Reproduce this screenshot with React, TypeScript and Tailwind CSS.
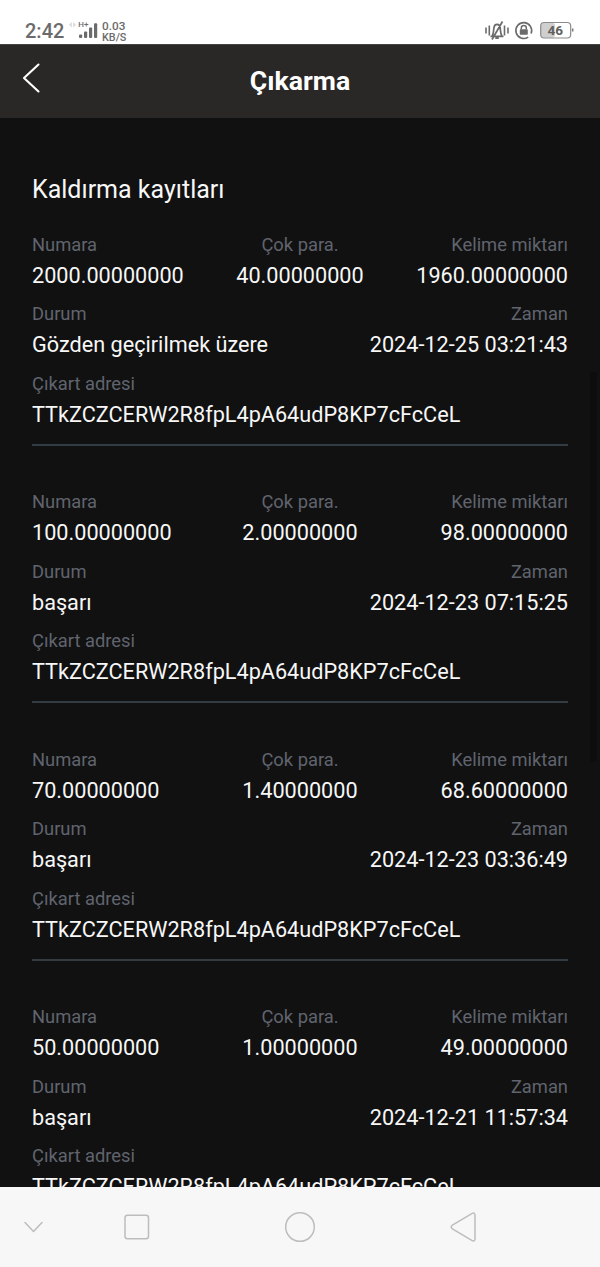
type Entry = {
  amount: string;
  fee: string;
  net: string;
  status: string;
  time: string;
};

const ADDRESS = "TTkZCZCERW2R8fpL4pA64udP8KP7cFcCeL";

const entries: Entry[] = [
  { amount: "2000.00000000", fee: "40.00000000", net: "1960.00000000", status: "Gözden geçirilmek üzere", time: "2024-12-25 03:21:43" },
  { amount: "100.00000000", fee: "2.00000000", net: "98.00000000", status: "başarı", time: "2024-12-23 07:15:25" },
  { amount: "70.00000000", fee: "1.40000000", net: "68.60000000", status: "başarı", time: "2024-12-23 03:36:49" },
  { amount: "50.00000000", fee: "1.00000000", net: "49.00000000", status: "başarı", time: "2024-12-21 11:57:34" },
];

function Field({ label, value, align = "text-left" }: { label: string; value: string; align?: string }) {
  return (
    <div className={`min-w-0 whitespace-nowrap ${align}`}>
      <div className="h-7 text-[18.33px] leading-7 text-[#60646e]">{label}</div>
      <div className="h-[34px] text-[21.67px] leading-[34px] text-[#f7f7f7]">{value}</div>
    </div>
  );
}

function Record({ entry }: { entry: Entry }) {
  return (
    <section className="h-[257.4px] shrink-0">
      <div className="flex h-[215.2px] flex-col gap-[7.5px] border-b-2 border-[#333b43]">
        <div className="grid grid-cols-3">
          <Field label="Numara" value={entry.amount} />
          <Field label="Çok para." value={entry.fee} align="text-center" />
          <Field label="Kelime miktarı" value={entry.net} align="text-right" />
        </div>
        <div className="flex justify-between">
          <Field label="Durum" value={entry.status} />
          <Field label="Zaman" value={entry.time} align="text-right" />
        </div>
        <Field label="Çıkart adresi" value={ADDRESS} />
      </div>
    </section>
  );
}

function StatusBar() {
  return (
    <div className="flex h-11 shrink-0 items-start justify-between bg-white pl-[25px] pr-[26px] text-[#6b6b6b]">
      <div className="flex pt-[19px]">
        <span className="w-[43px] whitespace-nowrap text-[20px] leading-6 font-medium">2:42</span>
        <svg className="h-6 w-[34px]" viewBox="68 19 34 24" fill="currentColor">
          <path d="M71.8 22 69 24.800l2.800 2.800zM73.200 22l2.800 2.800-2.800 2.800z" opacity=".25" />
          <text x="78.300" y="27" fontSize="8" fontWeight="500">H+</text>
          <rect x="79" y="34.500" width="3.200" height="3.500" rx="1" />
          <rect x="84" y="31.500" width="3.200" height="6.500" rx="1" />
          <rect x="89" y="27.500" width="3.200" height="10.500" rx="1" />
          <rect x="94" y="23.300" width="3.200" height="14.700" rx="1" />
        </svg>
        <div className="pt-[2px] font-medium">
          <div className="h-[10.5px] text-[11.8px] leading-[11px]">0.03</div>
          <div className="h-[11px] text-[10.8px] leading-[11px]">KB/S</div>
        </div>
      </div>
      <div className="flex pt-[19px]">
        <svg className="h-6 w-[52px]" viewBox="482 19 52 24" fill="none" stroke="currentColor">
          <path d="M486 27.5v6M489.300 25.500v10M504.500 25.500v10M508 27.500v6" strokeWidth="1.6" />
          <path d="M490.500 36.300h13M492.300 36c1.300-2.500 1.200-5 1.600-8 .5-4.800 5.800-4.800 6.300 0 .4 3 .3 5.500 1.600 8M495.300 38.200h3.500M492 39.500l10.500-18" strokeWidth="1.700" />
          <path d="M528.200 37.100a7.900 7.900 0 1 1 2.900-3.600" strokeWidth="1.600" />
          <path d="M521.300 29.500v-1.500a2.500 2.500 0 0 1 5 0v1.500" strokeWidth="1.500" />
          <rect x="519.800" y="29.300" width="8" height="5.400" rx=".6" fill="currentColor" stroke="none" />
        </svg>
        <svg className="h-6 w-10" viewBox="534 19 40 24">
          <rect x="541" y="22.700" width="14" height="15" rx="3" fill="#cfcfcf" />
          <rect x="540.700" y="22.500" width="30" height="15.500" rx="3.500" fill="none" stroke="#8b8b8b" strokeWidth="1.200" />
          <path d="M572.700 28.500v3" stroke="#777" strokeWidth="1.500" />
          <text x="555.200" y="35" textAnchor="middle" fontSize="13.500" fontWeight="700" fill="#606060">46</text>
        </svg>
      </div>
    </div>
  );
}

function Header() {
  return (
    <header className="grid h-[74px] shrink-0 grid-cols-[1fr_auto_1fr] items-center border-t border-[#444442] bg-[#292827] pb-[2px] text-white">
      <svg className="-mt-[5px] ml-5 h-8 w-6" viewBox="0 0 24 32" fill="none" stroke="currentColor" strokeWidth="2.100" strokeLinecap="round" strokeLinejoin="round">
        <path d="M18.500 2.500 4 16l14.500 13.500" />
      </svg>
      <h1 className="text-[26.670px] leading-8 font-bold">Çıkarma</h1>
    </header>
  );
}

function NavigationBar() {
  return (
    <nav className="h-20 shrink-0 bg-[#f7f7f7]">
      <svg className="h-20 w-full" viewBox="0 0 600 80" fill="none" stroke="#bdbdbd" strokeWidth="1.500" strokeLinecap="round" strokeLinejoin="round">
        <path d="m25 35.500 8.500 9 8.500-9" />
        <rect x="125" y="28.300" width="23.500" height="23.500" rx="2.500" />
        <circle cx="300" cy="40" r="14.300" />
        <path d="M452.400 38.200 471.800 26.600q3-1.600 3.200 1.400v24q-.2 3-3.200 1.400L452.400 41.800q-2.400-1.800 0-3.600z" />
      </svg>
    </nav>
  );
}

export default function App() {
  return (
    <div className="flex h-[1267px] w-[600px] flex-col overflow-hidden bg-[#111111] font-[Roboto,sans-serif]">
      <StatusBar />
      <Header />
      <main className="relative flex min-h-0 flex-1 flex-col overflow-hidden px-8 pt-[54px]">
        <h2 className="mb-[22.9px] h-9 shrink-0 text-[25px] leading-9 text-[#f7f7f7]">Kaldırma kayıtları</h2>
        {entries.map((entry) => (
          <Record key={entry.time} entry={entry} />
        ))}
        <div className="absolute top-[254px] right-[3px] h-[390px] w-[7px] bg-[#0d0d0d]" />
      </main>
      <NavigationBar />
    </div>
  );
}
